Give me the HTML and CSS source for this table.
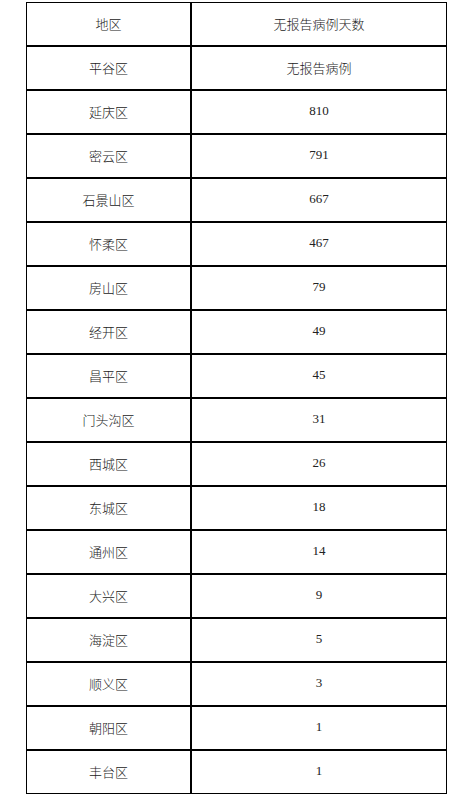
FILE: index.html
```html
<!DOCTYPE html>
<html lang="zh-CN">
<head>
<meta charset="utf-8">
<title>无报告病例天数</title>
<link rel="stylesheet" href="styles.css">
</head>
<body>
<div class="table">
  <div class="cell">地区</div><div class="cell">无报告病例天数</div>
  <div class="cell">平谷区</div><div class="cell">无报告病例</div>
  <div class="cell">延庆区</div><div class="cell">810</div>
  <div class="cell">密云区</div><div class="cell">791</div>
  <div class="cell">石景山区</div><div class="cell">667</div>
  <div class="cell">怀柔区</div><div class="cell">467</div>
  <div class="cell">房山区</div><div class="cell">79</div>
  <div class="cell">经开区</div><div class="cell">49</div>
  <div class="cell">昌平区</div><div class="cell">45</div>
  <div class="cell">门头沟区</div><div class="cell">31</div>
  <div class="cell">西城区</div><div class="cell">26</div>
  <div class="cell">东城区</div><div class="cell">18</div>
  <div class="cell">通州区</div><div class="cell">14</div>
  <div class="cell">大兴区</div><div class="cell">9</div>
  <div class="cell">海淀区</div><div class="cell">5</div>
  <div class="cell">顺义区</div><div class="cell">3</div>
  <div class="cell">朝阳区</div><div class="cell">1</div>
  <div class="cell">丰台区</div><div class="cell">1</div>
</div>
</body>
</html>
```
FILE: styles.css
```css
html, body {
  margin: 0;
  padding: 0;
  background: #fff;
}
body {
  font-family: "Liberation Serif", "Noto Sans CJK SC", serif;
  font-size: 13px;
  color: #222;
}
.table {
  display: grid;
  grid-template-columns: 163px 254px;
  grid-auto-rows: 42px;
  gap: 2px;
  background: #000;
  border: 1px solid #000;
  width: max-content;
  margin: 2px 0 0 26px;
}
.cell {
  background: #fff;
  display: flex;
  align-items: center;
  justify-content: center;
  padding-bottom: 2px;
  font-weight: 300;
}
```
